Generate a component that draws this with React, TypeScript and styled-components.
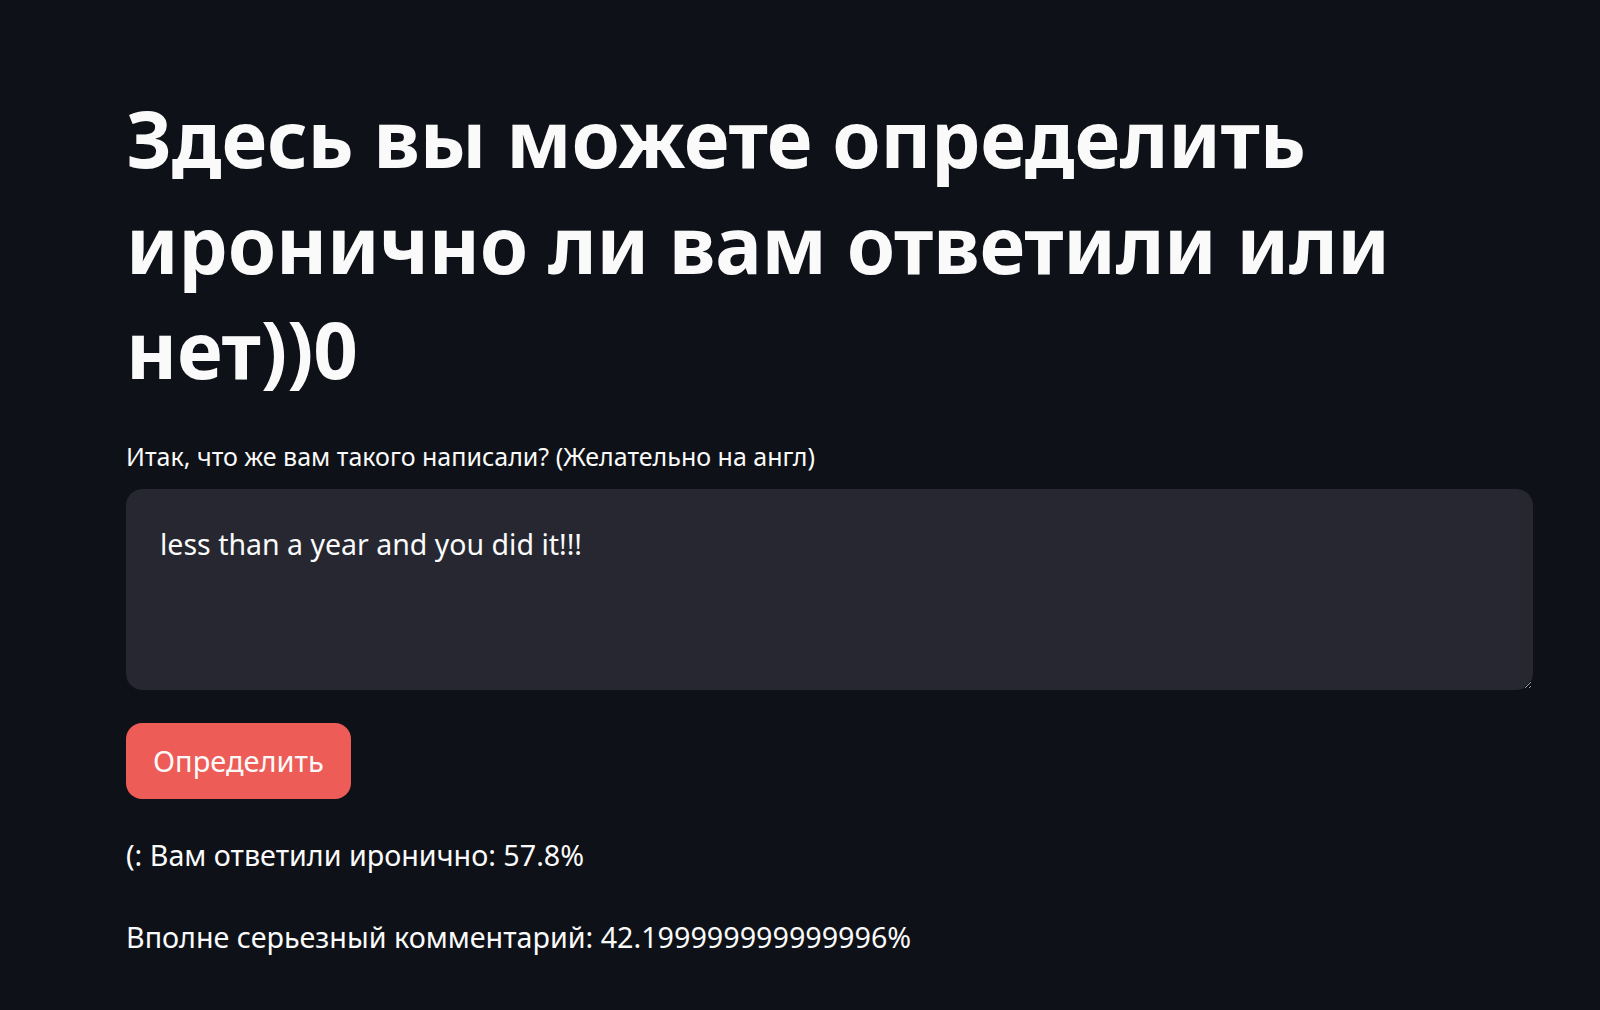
import React, { useState } from "react";
import styled, { createGlobalStyle } from "styled-components";

const Global = createGlobalStyle`
  html, body {
    margin: 0;
    padding: 0;
    background: #0e1117;
    color-scheme: dark;
  }
  body {
    font-family: "Noto Sans", "Open Sans", sans-serif;
    color: #fafafa;
  }
`;

const Page = styled.main`
  min-height: 1010px;
  background: #0e1117;
  display: flex;
  padding-left: 126px;
`;

const Block = styled.div`
  width: 1407px;
  padding: 86px 0 60px;
  display: flex;
  flex-direction: column;
`;

const Title = styled.h1`
  margin: 0;
  font-size: 78px;
  font-weight: 700;
  line-height: 105.6px;
  color: #fafafa;
  letter-spacing: -0.2px;
`;

const Label = styled.label`
  margin-top: 37px;
  font-size: 25px;
  line-height: 32px;
  color: #fafafa;
`;

const Area = styled.textarea`
  margin-top: 17px;
  box-sizing: border-box;
  width: 100%;
  height: 201px;
  background: #262730;
  border: 1px solid #262730;
  border-radius: 16px;
  padding: 34px 33px;
  font-family: "Noto Sans", sans-serif;
  font-size: 28.5px;
  line-height: 40px;
  color: #fafafa;
  resize: vertical;
  outline: none;
`;

const Button = styled.button`
  align-self: flex-start;
  margin-top: 33px;
  box-sizing: border-box;
  height: 76px;
  padding: 0 27px;
  background: #ee5c57;
  border: none;
  border-radius: 16px;
  font-family: "Noto Sans", sans-serif;
  font-size: 29px;
  line-height: 40px;
  color: #fafafa;
  cursor: pointer;
`;

const Result = styled.p<{ $gap: number }>`
  margin: ${(p) => p.$gap}px 0 0;
  font-size: 28.7px;
  line-height: 40px;
  color: #fafafa;
`;

export default function App() {
  const [text, setText] = useState("less than a year and you did it!!!");
  return (
    <>
      <Global />
      <Page>
        <Block>
          <Title>
            Здесь вы можете определить
            <br />
            иронично ли вам ответили или
            <br />
            нет))0
          </Title>
          <Label htmlFor="msg">Итак, что же вам такого написали? (Желательно на англ)</Label>
          <Area id="msg" value={text} onChange={(e) => setText(e.target.value)} />
          <Button>Определить</Button>
          <Result $gap={36}>(: Вам ответили иронично: 57.8%</Result>
          <Result $gap={42}>Вполне серьезный комментарий: 42.199999999999996%</Result>
        </Block>
      </Page>
    </>
  );
}
